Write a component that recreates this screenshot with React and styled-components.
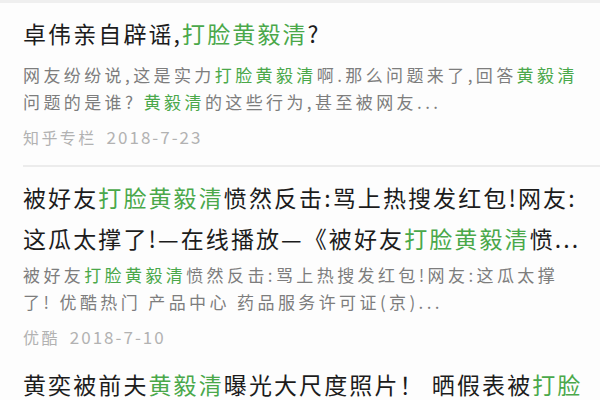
import React from 'react'
import styled, { createGlobalStyle } from 'styled-components'

const GlobalStyle = createGlobalStyle`
    html, body {
        margin:0;
        padding:0;
        background:#fdfdfd;
    }
    body{
        font-family:"Noto Sans CJK SC", "Noto Sans", sans-serif;
        width:600px;
        height:400px;
        overflow:hidden;
    }
`

const results = [
    {
        title: [['卓伟亲自辟谣,', ['打脸黄毅清'], '?']],
        snippet: [
            ['网友纷纷说,这是实力', ['打脸黄毅清'], '啊.那么问题来了,回答', ['黄毅清']],
            ['问题的是谁? ', ['黄毅清'], '的这些行为,甚至被网友...'],
        ],
        source: '知乎专栏',
        date: '2018-7-23',
        divider: true,
        gap: 8,
    },
    {
        title: [
            ['被好友', ['打脸黄毅清'], '愤然反击:骂上热搜发红包!网友:'],
            ['这瓜太撑了!—在线播放—《被好友', ['打脸黄毅清'], '愤...'],
        ],
        snippet: [
            ['被好友', ['打脸黄毅清'], '愤然反击:骂上热搜发红包!网友:这瓜太撑'],
            ['了! 优酷热门 产品中心 药品服务许可证(京)...'],
        ],
        source: '优酷',
        date: '2018-7-10',
        divider: false,
        gap: 3,
    },
    {
        title: [['黄奕被前夫', ['黄毅清'], '曝光大尺度照片！ 晒假表被', ['打脸']]],
    },
]

const renderLine = (parts) =>
    parts.map((p, i) => (Array.isArray(p) ? <Hl key={i}>{p[0]}</Hl> : <span key={i}>{p}</span>))

const App = () => {
    return (
        <>
            <GlobalStyle />
            <Page>
                {results.map((r, i) => (
                    <Item key={i} $divider={r.divider}>
                        <Title>
                            {r.title.map((l, j) => <Line key={j}>{renderLine(l)}</Line>)}
                        </Title>
                        {r.snippet && (
                            <Snippet $gap={r.gap}>
                                {r.snippet.map((l, j) => <Line key={j}>{renderLine(l)}</Line>)}
                            </Snippet>
                        )}
                        {r.source && (
                            <Meta>
                                <span>{r.source}</span>
                                <Date>{r.date}</Date>
                            </Meta>
                        )}
                    </Item>
                ))}
            </Page>
        </>
    )
}

const Page = styled.div`
    width:600px;
    height:400px;
    overflow:hidden;
    border-top:3px solid #efefef;
    box-sizing:border-box;
    display:flex;
    flex-direction:column;
`

const Item = styled.div`
    flex-shrink:0;
    margin-left:23px;
    padding:10px 0 ${p => (p.$divider ? '15px' : '4px')} 0;
    border-bottom:${p => (p.$divider ? '2px solid #ececec' : 'none')};
`

const Line = styled.div`
    white-space:nowrap;
    overflow:hidden;
`

const Title = styled.div`
    font-size:23px;
    line-height:41px;
    letter-spacing:2.1px;
    color:#1c1c1c;
`

const Snippet = styled.div`
    margin-top:${p => p.$gap}px;
    font-size:17px;
    line-height:26.5px;
    letter-spacing:3.4px;
    color:#7d7d7d;
`

const Meta = styled.div`
    margin-top:9px;
    display:flex;
    gap:10px;
    font-size:16px;
    line-height:26px;
    letter-spacing:2.4px;
    color:#b2b2b2;
`

const Date = styled.span`
    font-size:17px;
    letter-spacing:2px;
`

const Hl = styled.span`
    color:#4aa84a;
`

export default App
